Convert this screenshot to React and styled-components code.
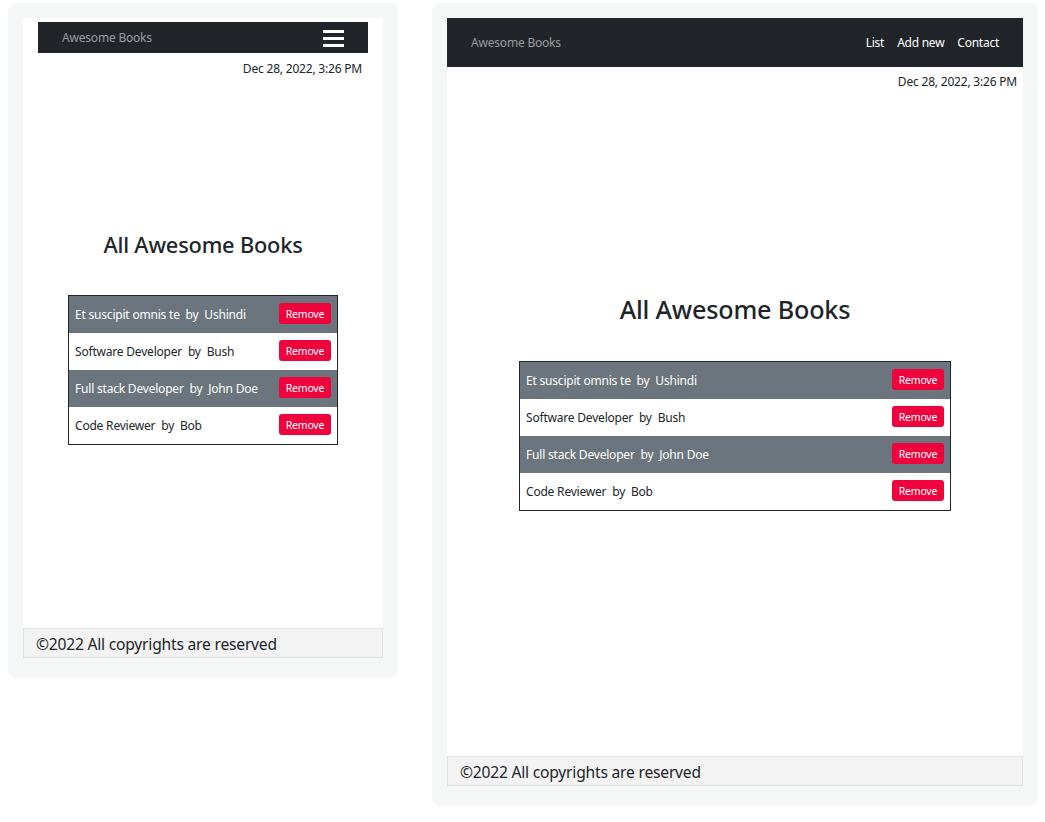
import React from "react";
import styled, { createGlobalStyle } from "styled-components";

const Global = createGlobalStyle`
  html, body { margin: 0; padding: 0; background: #fff; }
  body { font-family: "Noto Sans", "Open Sans", sans-serif; color: #212529; }
  * { box-sizing: border-box; }
`;

const Page = styled.div`
  display: flex;
  align-items: flex-start;
  gap: 34px;
  padding: 3px 0 0 8px;
`;

const Frame = styled.div`
  width: ${(p) => (p.$compact ? 390 : 606)}px;
  background: #f5f6f6;
  border-radius: 9px;
  padding: 15px 15px 20px;
`;

const Screen = styled.div`
  height: ${(p) => (p.$compact ? 640 : 768)}px;
  background: #fff;
  display: flex;
  flex-direction: column;
`;

const NavBar = styled.nav`
  background: #212529;
  height: ${(p) => (p.$compact ? 31 : 49)}px;
  margin: ${(p) => (p.$compact ? "4px 15px 0" : "0")};
  padding: 0 24px;
  display: flex;
  align-items: center;
  justify-content: space-between;
`;

const Brand = styled.span`
  color: rgba(255, 255, 255, 0.55);
  font-size: 12px;
  letter-spacing: -0.2px;
`;

const NavLinks = styled.ul`
  list-style: none;
  display: flex;
  gap: 13px;
  margin: 0;
  padding: 0;
`;

const NavLink = styled.li`
  color: #fff;
  font-size: 12px;
  letter-spacing: -0.25px;
`;

const Burger = styled.button`
  width: 21px;
  height: 17px;
  padding: 0;
  border: none;
  background: transparent;
  display: flex;
  flex-direction: column;
  justify-content: space-between;
  margin-top: 1px;
  span {
    display: block;
    height: 3px;
    background: #fff;
  }
`;

const DateLine = styled.div`
  text-align: right;
  font-size: 12px;
  letter-spacing: -0.2px;
  line-height: 18px;
  margin: ${(p) => (p.$compact ? "7px 15px 0" : "6px 0 0")};
  padding-right: 6px;
  color: #212529;
`;

const Title = styled.h2`
  text-align: center;
  margin: ${(p) => (p.$compact ? "154px 0 0" : "203px 0 0")};
  font-size: ${(p) => (p.$compact ? 21.8 : 25.2)}px;
  line-height: 1.2;
  font-weight: 500;
  color: #212529;
  letter-spacing: -0.2px;
`;

const BookTable = styled.ul`
  list-style: none;
  margin: 37px auto 0;
  padding: 0;
  width: 75%;
  border: 1px solid #212529;
`;

const BookRow = styled.li`
  height: 37px;
  display: flex;
  align-items: center;
  justify-content: space-between;
  padding: 0 6px;
  background: ${(p) => (p.$shaded ? "#6c757d" : "#fff")};
  color: ${(p) => (p.$shaded ? "#fff" : "#212529")};
  font-size: 12px;
  letter-spacing: -0.2px;
  white-space: pre;
`;

const RemoveButton = styled.button`
  width: 52px;
  height: 21px;
  border: none;
  border-radius: 3px;
  background: #ef033d;
  color: #fff;
  font-family: inherit;
  font-size: 10.5px;
  letter-spacing: -0.2px;
  padding: 0;
  margin-top: -2px;
  cursor: pointer;
`;

const Footer = styled.footer`
  margin-top: auto;
  height: 30px;
  background: #f3f3f3;
  border: 1px solid #dee2e6;
  padding: 2px 12px 0;
  display: flex;
  align-items: center;
  font-size: 15.6px;
  letter-spacing: -0.2px;
  color: #212529;
`;

const books = [
  { title: "Et suscipit omnis te", author: "Ushindi" },
  { title: "Software Developer", author: "Bush" },
  { title: "Full stack Developer", author: "John Doe" },
  { title: "Code Reviewer", author: "Bob" },
];

function Mockup({ compact }) {
  return (
    <Frame $compact={compact}>
      <Screen $compact={compact}>
        <NavBar $compact={compact}>
          <Brand>Awesome Books</Brand>
          {compact ? (
            <Burger aria-label="menu">
              <span />
              <span />
              <span />
            </Burger>
          ) : (
            <NavLinks>
              <NavLink>List</NavLink>
              <NavLink>Add new</NavLink>
              <NavLink>Contact</NavLink>
            </NavLinks>
          )}
        </NavBar>
        <DateLine $compact={compact}>Dec 28, 2022, 3:26 PM</DateLine>
        <Title $compact={compact}>All Awesome Books</Title>
        <BookTable>
          {books.map((b, i) => (
            <BookRow key={b.title} $shaded={i % 2 === 0}>
              <span>{`${b.title}  by  ${b.author}`}</span>
              <RemoveButton>Remove</RemoveButton>
            </BookRow>
          ))}
        </BookTable>
        <Footer>©2022 All copyrights are reserved</Footer>
      </Screen>
    </Frame>
  );
}

export default function App() {
  return (
    <>
      <Global />
      <Page>
        <Mockup compact />
        <Mockup />
      </Page>
    </>
  );
}
